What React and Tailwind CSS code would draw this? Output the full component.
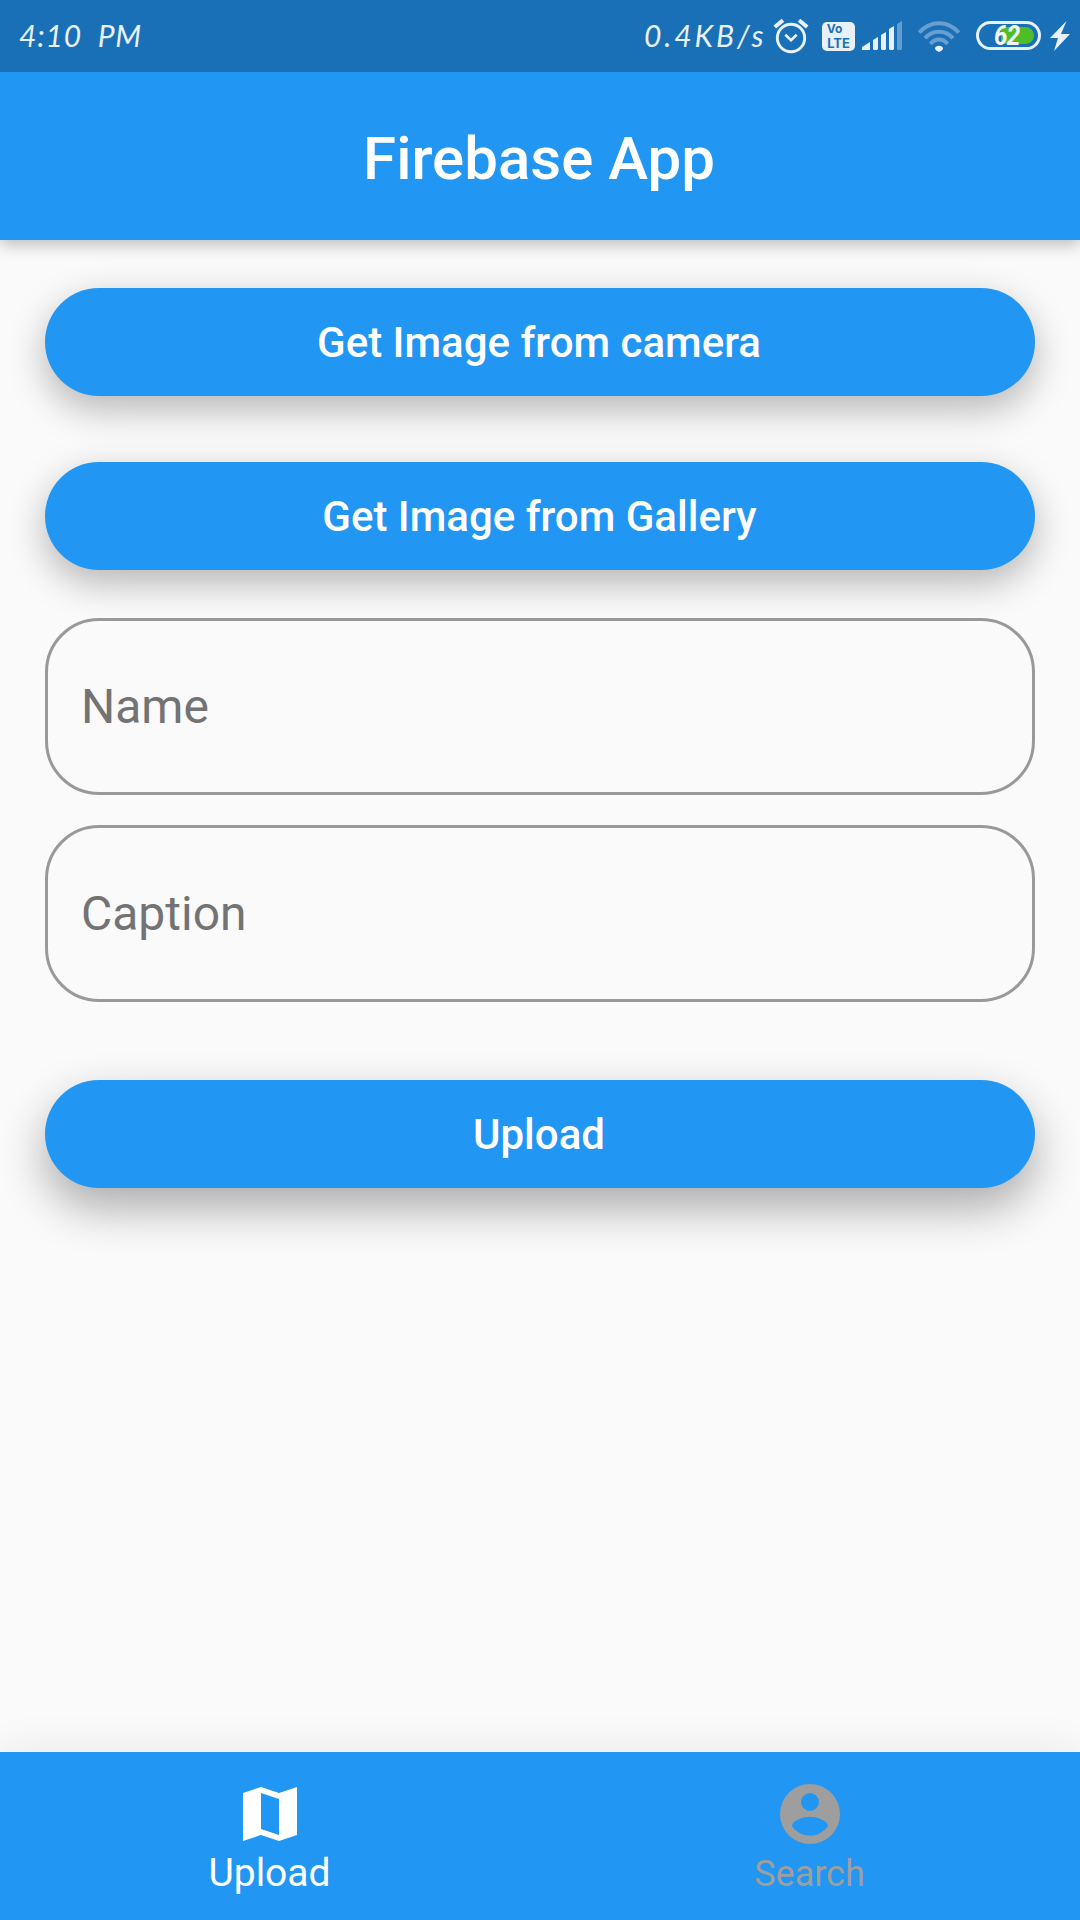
import React from "react";

function StatusText({ children, className }) {
  return (
    <span
      className={
        "-mt-[3px] block font-['Lato'] text-[30px] leading-[36px] font-normal whitespace-nowrap italic text-[#e8f0f8] " +
        className
      }
    >
      {children}
    </span>
  );
}

function AlarmIcon() {
  return (
    <svg className="-mt-[1px]" width="36" height="36" viewBox="0 0 36 36" fill="none" stroke="#e8f0f8">
      <circle cx="18" cy="20" r="13.7" strokeWidth="2.9" />
      <path d="M1.8 9 10 2.2M34.2 9 26 2.2" strokeWidth="4" />
      <path d="M12.3 16.8 18 22.2 23.7 16.8" strokeWidth="2.7" />
    </svg>
  );
}

function SignalIcon() {
  return (
    <svg width="42" height="30" viewBox="0 0 42 30" fill="#e8f0f8">
      <path d="M0 29V26L8 21V28.5L7.500 29Z" />
      <path d="M11 19 16 16V28L15 29H12L11 28Z" />
      <path d="M19 14 24 11V28L23 29H20L19 28Z" />
      <path d="M27 8 32 5V28L31 29H28L27 28Z" />
      <path d="M35 3 40 0V28L39 29H36L35 28Z" opacity=".36" />
    </svg>
  );
}

function WifiIcon() {
  return (
    <svg width="42" height="31" viewBox="0 0 42 31" fill="none">
      <g stroke="#689fd0" strokeWidth="4">
        <path d="M1.300 11.500C12 -1 30 -1 40.700 11.500" />
        <path d="M7 17.300C14.500 8.500 27.500 8.500 35 17.300" />
        <path d="M12.500 23C17 17 25 17 29.500 23" />
      </g>
      <path d="M17 27.500C17 23.800 25 23.800 25 27.500C25 29 23 30 21 31C19 30 17 29 17 27.500Z" fill="#e8f0f8" />
    </svg>
  );
}

function StatusBar() {
  return (
    <div className="flex h-[72px] items-center bg-[#1a70b6] pl-[19px]">
      <StatusText className="tracking-[0.8px] [word-spacing:8px]">4:10 PM</StatusText>
      <div className="flex-1" />
      <StatusText className="w-[129px] tracking-[2.9px]">0.4KB/s</StatusText>
      <AlarmIcon />
      <div className="ml-[13px] flex h-[29px] w-[33px] flex-col items-center justify-center rounded-[5px] bg-[#e8f0f8] font-['Inter'] font-bold text-[#1a70b6]">
        <span className="-ml-2 block text-[12px] leading-[14px]">Vo</span>
        <span className="block text-[13px] leading-[14px]">LTE</span>
      </div>
      <span className="ml-[7px]"><SignalIcon /></span>
      <span className="ml-[14px]"><WifiIcon /></span>
      <div className="-mt-[1px] ml-[16px] flex h-[29px] w-[65px] items-center rounded-full border-[3px] border-[#e8f0f8] p-[3px]">
        <div className="ml-[19px] flex h-[17px] w-[33px] items-center rounded-r-full bg-[#4fbd27]">
          <span className="-ml-[7px] block origin-left scale-x-90 pt-px font-['Roboto'] text-[27px] leading-none font-bold tracking-[-1px] text-[#f1f6f4] italic">62</span>
        </div>
      </div>
      <svg className="mr-[10px] ml-[9px]" width="20" height="30" viewBox="0 0 20 30" fill="#e8f0f8">
        <path d="M16.500 0 0 17H8L4 30 20 13H11Z" />
      </svg>
    </div>
  );
}

function Button({ children, className }) {
  return (
    <button
      className={
        "block h-[108px] w-full rounded-full bg-[#2196f3] pr-[2px] text-center text-[42px] leading-[110px] font-medium text-white " +
        className
      }
    >
      {children}
    </button>
  );
}

function Field({ label, className }) {
  return (
    <div
      className={
        "flex h-[177px] items-center rounded-[54px] border-[3px] border-[#999999] pl-[33px] text-[48px] leading-[56px] text-[#737373] " +
        className
      }
    >
      {label}
    </div>
  );
}

function MapIcon() {
  return (
    <svg width="72" height="72" viewBox="0 0 24 24" fill="currentColor" fillRule="evenodd">
      <path d="M3 5 9 3 15 5 21 3V19L15 21 9 19 3 21ZM9 5V17L15 19V7Z" />
    </svg>
  );
}

function AccountIcon() {
  return (
    <svg width="72" height="72" viewBox="0 0 24 24" fill="currentColor" fillRule="evenodd">
      <path d="M12 2a10 10 0 1 0 0 20 10 10 0 0 0 0-20zM12 5a3 3 0 1 1 0 6 3 3 0 0 1 0-6zM12 19.200c-2.500 0-4.710-1.280-6-3.220.03-1.990 4-3.080 6-3.080s5.970 1.090 6 3.080c-1.290 1.940-3.500 3.220-6 3.220z" />
    </svg>
  );
}

export default function App() {
  return (
    <div className="flex h-[1920px] w-[1080px] flex-col overflow-hidden bg-[#fafafa] font-['Roboto',sans-serif]">
      <header className="z-10 shadow-[0_4px_16px_rgba(0,0,0,0.27)]">
        <StatusBar />
        <h1 className="h-[168px] bg-[#2196f3] pt-[52px] pr-[2px] text-center text-[60px] leading-[70px] font-medium text-white">
          Firebase App
        </h1>
      </header>
      <main className="flex-1 px-[45px] pt-[48px]">
        <Button className="shadow-[0_13px_37px_rgba(0,0,0,0.28)]">Get Image from camera</Button>
        <Button className="mt-[66px] pr-px shadow-[0_13px_37px_rgba(0,0,0,0.28)]">Get Image from Gallery</Button>
        <Field label="Name" className="mt-[48px]" />
        <Field label="Caption" className="mt-[30px]" />
        <Button className="mt-[78px] shadow-[0_20px_46px_rgba(0,0,0,0.32)]">Upload</Button>
      </main>
      <nav className="flex h-[168px] bg-[#2196f3] pt-[26px] shadow-[0_0_40px_rgba(0,0,0,0.08)]">
        <div className="flex flex-1 flex-col items-center text-white">
          <MapIcon />
          <span className="block pr-px text-[39px] leading-[46px]">Upload</span>
        </div>
        <div className="flex flex-1 flex-col items-center text-[#9e9e9e]">
          <AccountIcon />
          <span className="block pr-px text-[36px] leading-[48px]">Search</span>
        </div>
      </nav>
    </div>
  );
}
